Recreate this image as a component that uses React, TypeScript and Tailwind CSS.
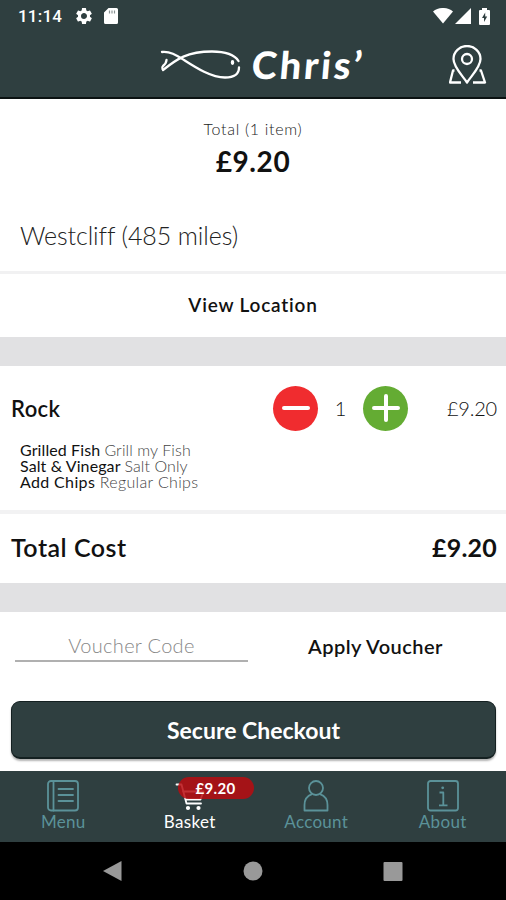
import React from 'react';
import clsx from 'clsx';

type Tab = {
  label: string;
  icon: React.ReactNode;
  labelClass: string;
  active?: boolean;
  badge?: string;
};

const options = [
  { name: 'Grilled Fish', value: 'Grill my Fish', spacing: 'tracking-[0.1px]' },
  { name: 'Salt & Vinegar', value: 'Salt Only', spacing: 'tracking-[0.1px]' },
  { name: 'Add Chips', value: 'Regular Chips', spacing: 'tracking-[0.35px]' },
];

const MenuIcon = () => (
  <svg width="32" height="32" viewBox="0 0 32 32" fill="none" stroke="currentColor" strokeWidth="1.8" strokeLinecap="round">
    <rect x="1" y="1" width="30" height="29.5" rx="3" />
    <path d="M6.5 1v29.5M11.5 9h14.5M11.5 15h14.5M11.5 21h14.5" />
  </svg>
);

const BasketIcon = () => (
  <svg width="32" height="32" viewBox="0 0 32 32" fill="none" stroke="currentColor" strokeWidth="1.8" strokeLinecap="round" strokeLinejoin="round">
    <path d="M2.500 4.500H7.500l5 19H27M9 11.500h20.500l-3 8H11.500" />
    <circle cx="14" cy="28" r="1.200" fill="currentColor" />
    <circle cx="24.500" cy="28" r="1.200" fill="currentColor" />
  </svg>
);

const AccountIcon = () => (
  <svg width="32" height="32" viewBox="0 0 32 32" fill="none" stroke="currentColor" strokeWidth="1.8" strokeLinejoin="round">
    <circle cx="16" cy="8" r="7" />
    <path d="M12 14.200C7 16 4.500 20.500 4.500 25v5.500h23V25c0-4.500-2.500-9-7.500-10.800" />
  </svg>
);

const AboutIcon = () => (
  <svg width="32" height="32" viewBox="0 0 32 32" fill="none" stroke="currentColor" strokeWidth="1.8" strokeLinejoin="round">
    <rect x="1" y="1" width="30" height="29.500" rx="2.500" />
    <path d="M12.500 12.500H16.300V25M12 25.300h8.500" />
    <circle cx="15.700" cy="7.800" r="1.400" fill="currentColor" stroke="none" />
  </svg>
);

const tabs: Tab[] = [
  { label: 'Menu', icon: <MenuIcon />, labelClass: 'tracking-[0.3px]' },
  { label: 'Basket', icon: <BasketIcon />, labelClass: 'tracking-[0.4px]', active: true, badge: '£9.20' },
  { label: 'Account', icon: <AccountIcon />, labelClass: 'tracking-[0.3px]' },
  { label: 'About', icon: <AboutIcon />, labelClass: 'tracking-[0.4px]' },
];

const StatusBar = () => (
  <div className="flex h-8 items-center justify-between pl-[18px] pr-4 text-white">
    <div className="flex items-center">
      <span className="w-[45px] font-[Roboto,sans-serif] text-[17px] font-medium leading-none tracking-[0.2px]">11:14</span>
      <svg className="ml-[11px]" width="20" height="20" viewBox="0 0 24 24" fill="currentColor">
        <path d="M19.140 12.940c.04-.3.060-.610.060-.940 0-.320-.020-.640-.070-.940l2.030-1.580a.49.49 0 0 0 .12-.61l-1.920-3.320a.488.488 0 0 0-.59-.22l-2.390.96c-.5-.38-1.030-.7-1.620-.94l-.36-2.540a.484.484 0 0 0-.48-.41h-3.840c-.24 0-.43.17-.47.41l-.36 2.540c-.59.24-1.130.57-1.620.94l-2.390-.96c-.22-.08-.47 0-.59.22L2.740 8.870c-.12.21-.08.47.12.61l2.030 1.580c-.05.3-.09.63-.09.94s.02.64.07.94l-2.030 1.580a.49.49 0 0 0-.12.61l1.920 3.320c.12.22.37.29.59.22l2.390-.96c.5.38 1.030.7 1.620.94l.36 2.540c.05.24.24.41.48.41h3.840c.24 0 .44-.17.47-.41l.36-2.540c.59-.24 1.130-.56 1.620-.94l2.390.96c.22.08.47 0 .59-.22l1.920-3.320c.12-.22.07-.47-.12-.61l-2.010-1.580zM12 15.600A3.610 3.610 0 0 1 8.400 12c0-1.980 1.620-3.600 3.600-3.600s3.600 1.620 3.600 3.600-1.620 3.600-3.600 3.600z" />
      </svg>
      <svg className="ml-2.5" width="14" height="16" viewBox="0 0 14 16">
        <path d="M4.500 0h8A1.500 1.500 0 0 1 14 1.500v13a1.500 1.500 0 0 1-1.500 1.500h-11A1.500 1.500 0 0 1 0 14.500V4.500z" fill="currentColor" />
        <path d="M5.500 2.500v3M8 2.500v3M10.500 2.500v3" stroke="#8b9495" strokeWidth="1.200" />
      </svg>
    </div>
    <div className="flex items-center">
      <svg width="20" height="16" viewBox="0 0 20 16" fill="currentColor">
        <path d="M0 3.500C5.500-1.200 14.500-1.200 20 3.500L10 15.500z" />
      </svg>
      <svg className="ml-[2px]" width="16" height="16" viewBox="0 0 16 16" fill="currentColor">
        <path d="M16 0v16H0z" />
      </svg>
      <svg className="ml-2" width="11" height="17" viewBox="0 0 11 17">
        <path d="M3 0h5v2h2a1 1 0 0 1 1 1v13a1 1 0 0 1-1 1H1a1 1 0 0 1-1-1V3a1 1 0 0 1 1-1h2z" fill="currentColor" />
        <path d="M6.200 4.500 3 10h2v4l3.200-5.500h-2z" fill="#2f3f40" />
      </svg>
    </div>
  </div>
);

const Header = () => (
  <header className="h-[99px] shrink-0 border-b-2 border-[#0b1212] bg-[#2f3f40]">
    <StatusBar />
    <div className="flex h-[65px] items-center pl-[158px] pr-[19px] text-white">
      <svg width="84" height="36" viewBox="0 0 84 36" fill="none" stroke="currentColor" strokeWidth="2.300" strokeLinecap="round">
        <path d="M4 5c8-.8 14 3 22 8 11 7 27 17.500 41 17.500 8 0 14-3 14-10" />
        <path d="M5 23C19 12 29 4.500 54 4.500c14 0 23 4 26.500 9.500" />
        <path d="M8.500 13c-.2 3-1 4-3.500 6-1 1-1 2-.5 3" />
        <ellipse cx="74.500" cy="15.500" rx="1" ry="1.700" fill="currentColor" strokeWidth="1.500" />
      </svg>
      <svg className="ml-2 overflow-visible" width="118" height="44" viewBox="0 0 118 44" fill="currentColor">
        <g transform="skewX(-5)">
          <text x="4" y="36" textLength="110" lengthAdjust="spacing" className="font-[Lato,sans-serif] text-[38px] font-black">
            Chris’
          </text>
        </g>
      </svg>
      <svg className="ml-auto" width="38" height="40" viewBox="0 0 38 40" fill="none" stroke="currentColor" strokeWidth="2.300" strokeLinejoin="round">
        <path d="M18 37.500C13 30 4.500 22 4.500 14a13.500 13 0 0 1 27 0c0 8-8.500 16-13.500 23.500z" />
        <circle cx="18" cy="14" r="5" />
        <path d="M5.500 25.500H4L1 37.500H12M30.500 25.500H32l4 12H24" />
      </svg>
    </div>
  </header>
);

const TabBar = () => (
  <nav className="grid h-[71px] shrink-0 grid-cols-4 bg-[#2f3f40]">
    {tabs.map((tab) => (
      <div key={tab.label} className={clsx('relative flex flex-col items-center pt-[9px]', tab.active ? 'text-white' : 'text-[#5b9299]')}>
        {tab.icon}
        <span className={clsx('text-[17px] leading-5', tab.labelClass)}>{tab.label}</span>
        {tab.badge && (
          <span className="absolute left-[51px] top-[6px] flex h-[22px] w-[76px] items-center justify-center rounded-full bg-[#b90c10]/85 text-[15px] font-bold tracking-[0.3px] text-white">
            {tab.badge}
          </span>
        )}
      </div>
    ))}
  </nav>
);

export default function App() {
  return (
    <div className="flex h-[900px] w-[506px] flex-col overflow-hidden bg-white font-[Lato,sans-serif] text-[#111]">
      <Header />

      {/* Order summary */}
      <section className="h-[175px] shrink-0 border-b-[3px] border-[#f1f1f2]">
        <div className="pt-5 text-center">
          <div className="text-[16px] font-light leading-5 tracking-[0.7px] text-[#222]">Total (1 item)</div>
          <div className="mt-1 text-[28px] font-bold leading-9 tracking-[0.6px]">£9.20</div>
        </div>
        <div className="mt-10 pl-5 text-[25px] font-light leading-8 tracking-[-0.1px] text-[#222]">Westcliff (485 miles)</div>
      </section>
      <button className="h-[63px] shrink-0 text-[19px] font-semibold tracking-[0.8px]">View Location</button>
      <div className="h-[29px] shrink-0 bg-[#e1e1e3]" />

      {/* Basket item */}
      <section className="h-[148px] shrink-0 border-b-4 border-[#f2f2f3] pt-5">
        <div className="flex h-11 items-center pl-[11px] pr-[9px]">
          <span className="text-[22px] font-semibold tracking-[0.4px]">Rock</span>
          <div className="ml-auto flex items-center">
            <button className="flex size-[45px] items-center justify-center rounded-full bg-[#f02c2f]">
              <span className="h-1 w-7 rounded-full bg-white" />
            </button>
            <span className="w-[45px] text-center text-[20px] font-light">1</span>
            <button className="flex size-[45px] items-center justify-center rounded-full bg-[#64ac33]">
              <svg width="28" height="28" viewBox="0 0 28 28" stroke="white" strokeWidth="4" strokeLinecap="round">
                <path d="M2 14h24M14 2v24" />
              </svg>
            </button>
          </div>
          <span className="w-[89px] text-right text-[20px] font-light tracking-[-0.2px]">£9.20</span>
        </div>
        <ul className="pl-5 pt-3 text-[16px] leading-4">
          {options.map((option) => (
            <li key={option.name} className={option.spacing}>
              {option.name} <span className="font-light text-[#444]">{option.value}</span>
            </li>
          ))}
        </ul>
      </section>
      <section className="flex h-[69px] shrink-0 items-center justify-between pb-0.5 pl-[11px] pr-[9px] text-[25px]">
        <span className="font-semibold tracking-[0.5px]">Total Cost</span>
        <span className="font-bold tracking-[0.2px]">£9.20</span>
      </section>
      <div className="h-[29px] shrink-0 bg-[#e1e1e3]" />

      {/* Voucher and checkout */}
      <section className="h-[159px] shrink-0">
        <div className="flex h-[89px] pl-[15px]">
          <input
            className="mt-[18px] h-8 w-[233px] border-b-2 border-[#b0b0b0] text-center text-[20px] font-light tracking-[0.3px] outline-none placeholder:text-[#888]"
            placeholder="Voucher Code"
          />
          <button className="ml-[60px] h-[68px] text-[20px] font-semibold tracking-[0.45px]">Apply Voucher</button>
        </div>
        <button className="mx-[11px] h-[58px] w-[485px] rounded-[9px] border border-b-2 border-[#142021] bg-[#2f3f40] pt-0.5 text-[23px] font-bold text-white shadow-[0_2px_2px_rgba(0,0,0,0.3)]">
          Secure Checkout
        </button>
      </section>

      <TabBar />
      <div className="flex h-[58px] shrink-0 items-center bg-black px-[102px]">
        <svg className="w-full" height="22" viewBox="0 0 302 22" fill="#999">
          <path d="M1 11 19.500 1v20z" />
          <circle cx="151" cy="11" r="9.500" />
          <rect x="281.500" y="2" width="19" height="19" rx="1" />
        </svg>
      </div>
    </div>
  );
}
